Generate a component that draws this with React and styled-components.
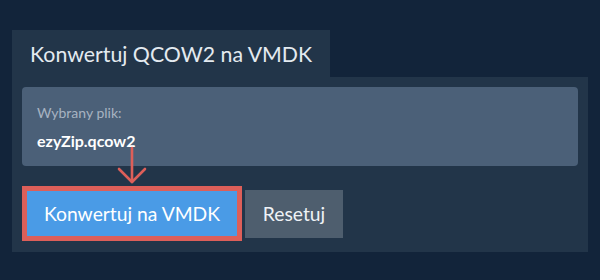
import React from "react";
import styled, { createGlobalStyle } from "styled-components";

const Global = createGlobalStyle`
  html, body { margin: 0; padding: 0; background: #12243a; }
  body { font-family: Lato, "Open Sans", sans-serif; }
`;

const Page = styled.div`
  width: 600px;
  height: 280px;
  padding: 30px 12px 0 12px;
  box-sizing: border-box;
`;

const Tab = styled.div`
  display: inline-flex;
  align-items: center;
  height: 47px;
  padding: 0 18px;
  background: #223549;
  color: #e4eaf0;
  font-size: 21.3px;
  font-weight: 400;
  box-sizing: border-box;
`;

const Panel = styled.div`
  position: relative;
  background: #223549;
  padding: 10px 10px 11px 10px;
`;

const FileBox = styled.div`
  height: 79px;
  box-sizing: border-box;
  background: #4b6078;
  border-radius: 4px;
  padding: 17px 0 0 15px;
  display: flex;
  flex-direction: column;
`;

const Label = styled.div`
  color: #a7b3c1;
  font-size: 14px;
  line-height: 18px;
`;

const FileName = styled.div`
  margin-top: 9px;
  color: #ffffff;
  font-size: 16px;
  font-weight: 700;
  line-height: 20px;
`;

const Actions = styled.div`
  display: flex;
  align-items: center;
  gap: 3px;
  margin-top: 20px;
`;

const Highlight = styled.div`
  border: 5px solid #dd5f59;
  display: flex;
`;

const Button = styled.button`
  border: none;
  margin: 0;
  font-family: Lato, "Open Sans", sans-serif;
  font-size: 19.3px;
  color: ${(p) => (p.$primary ? "#ffffff" : "#eef2f6")};
  background: ${(p) => (p.$primary ? "#4a9be6" : "#4e5e6e")};
  width: ${(p) => (p.$primary ? "210px" : "98px")};
  height: ${(p) => (p.$primary ? "45px" : "48px")};
  padding: 0;
  cursor: pointer;
`;

const Arrow = styled.svg`
  position: absolute;
  left: 100px;
  top: 65px;
  overflow: visible;
`;

export default function App() {
  return (
    <>
      <Global />
      <Page>
        <Tab>Konwertuj QCOW2 na VMDK</Tab>
        <Panel>
          <FileBox>
            <Label>Wybrany plik:</Label>
            <FileName>ezyZip.qcow2</FileName>
          </FileBox>
          <Actions>
            <Highlight>
              <Button $primary>Konwertuj na VMDK</Button>
            </Highlight>
            <Button>Resetuj</Button>
          </Actions>
          <Arrow width="40" height="46" viewBox="0 0 40 46">
            <g stroke="#dd5f59" strokeWidth="2.6" fill="none" strokeLinecap="round" strokeLinejoin="round">
              <line x1="20" y1="6" x2="20" y2="40" />
              <polyline points="7,27 20,40 33,27" />
            </g>
          </Arrow>
        </Panel>
      </Page>
    </>
  );
}
